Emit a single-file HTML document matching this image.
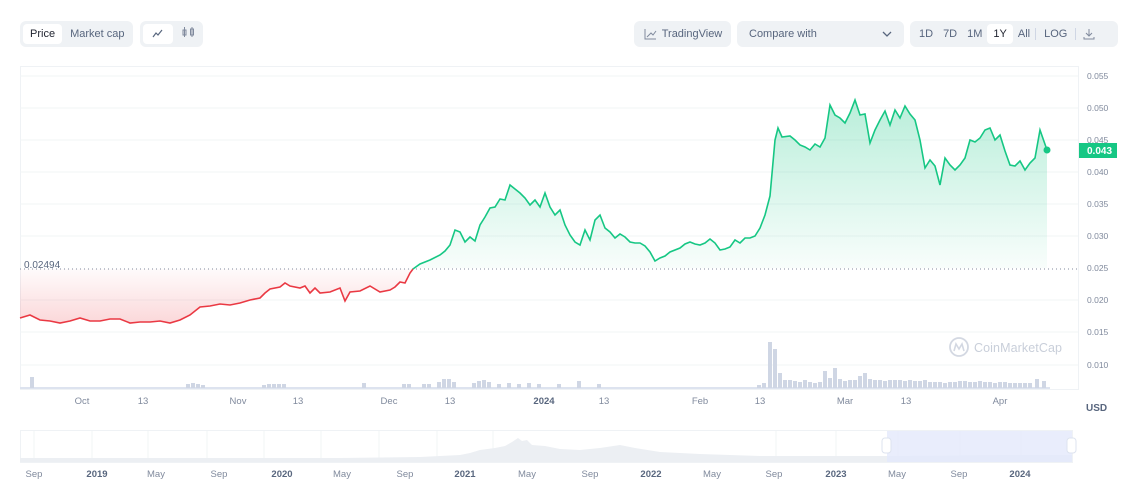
<!DOCTYPE html>
<html><head><meta charset="utf-8"><style>
body{margin:0;width:1135px;height:491px;background:#fff;font-family:"Liberation Sans",sans-serif;overflow:hidden;position:relative}
.grp{position:absolute;top:21px;height:26px;background:#eff2f5;border-radius:6px;display:flex;align-items:center;padding:0 3px;box-sizing:border-box;white-space:nowrap}
.b{font-size:11px;color:#58667e;padding:0 7px;height:20px;line-height:21px;border-radius:4px;white-space:nowrap}
.b.on{background:#fff;color:#222531}
</style></head><body>
<div class="grp" style="left:20px;width:113px"><span class="b on">Price</span><span class="b" style="padding-left:8px">Market cap</span></div>
<div class="grp" style="left:140px;width:63px"><span class="b on" style="width:18px;padding:0 6px"><svg width="18" height="20" viewBox="0 0 18 20"><path d="M4 13l3-4 2 2 4-5" stroke="#58667e" stroke-width="1.2" fill="none"/></svg></span><span style="margin-left:8px"><svg width="14" height="14" viewBox="0 0 14 14"><path d="M3.5 2v10M11 2v10" stroke="#808a9d" stroke-width="1"/><rect x="2" y="5" width="3" height="5" fill="none" stroke="#808a9d"/><rect x="9.5" y="4" width="3" height="6" fill="none" stroke="#808a9d"/></svg></span></div>
<div class="grp" style="left:634px;width:97px;justify-content:center"><svg width="14" height="12" style="margin-right:5px"><path d="M2 1v10h11M4 9l4-4 2 2 3-4" stroke="#808a9d" stroke-width="1" fill="none"/></svg><span style="font-size:11px;color:#58667e">TradingView</span></div>
<div class="grp" style="left:737px;width:167px;padding:0 12px;justify-content:space-between"><span style="font-size:11px;color:#58667e">Compare with</span><svg width="10" height="6"><path d="M1 1l4 4 4-4" stroke="#58667e" stroke-width="1.3" fill="none"/></svg></div>
<div class="grp" style="left:910px;width:208px;padding:0 4px"><span class="b" style="padding:0 5px">1D</span><span class="b" style="padding:0 5px">7D</span><span class="b" style="padding:0 5px">1M</span><span class="b on" style="padding:0 6px">1Y</span><span class="b" style="padding:0 5px">All</span><span style="width:1px;height:12px;background:#cfd6e4"></span><span class="b" style="padding:0 8px">LOG</span><span style="width:1px;height:12px;background:#cfd6e4"></span><svg width="26" height="14"><path d="M13 2v7M10 6l3 3 3-3M8 10v2h10v-2" stroke="#808a9d" stroke-width="1" fill="none"/></svg></div>

<svg width="1135" height="491" style="position:absolute;left:0;top:0">
<defs>
<linearGradient id="g" gradientUnits="userSpaceOnUse" x1="0" y1="100" x2="0" y2="268"><stop offset="0" stop-color="#16c784" stop-opacity=".3"/><stop offset="1" stop-color="#16c784" stop-opacity=".03"/></linearGradient>
<linearGradient id="r" gradientUnits="userSpaceOnUse" x1="0" y1="269" x2="0" y2="330"><stop offset="0" stop-color="#ea3943" stop-opacity=".02"/><stop offset="1" stop-color="#ea3943" stop-opacity=".22"/></linearGradient>
</defs>
<rect x="20.5" y="66.5" width="1058" height="323" fill="none" stroke="#eff2f5"/>
<g stroke="#f2f4f6"><line x1="20" x2="1078" y1="76" y2="76"/><line x1="20" x2="1078" y1="108" y2="108"/><line x1="20" x2="1078" y1="140" y2="140"/><line x1="20" x2="1078" y1="172" y2="172"/><line x1="20" x2="1078" y1="204" y2="204"/><line x1="20" x2="1078" y1="236" y2="236"/><line x1="20" x2="1078" y1="300" y2="300"/><line x1="20" x2="1078" y1="332" y2="332"/><line x1="20" x2="1078" y1="365" y2="365"/></g>
<polygon fill="url(#r)" points="20,269 20,318 30,315 40,320 50,321 60,323 70,321 80,318 90,321 100,321 110,319 120,319 130,323 140,322 150,322 160,321 170,323 180,320 190,315 200,307 210,306 220,304 230,305 240,303 250,300 260,298 265,293 270,289 280,287 285,283 290,286 300,288 305,286 310,293 315,288 320,293 330,292 340,288 345,301 350,292 360,291 370,286 380,292 390,290 395,287 400,282 405,283 410,273 413,269"/>
<polygon fill="url(#g)" points="413,268 420,264 430,260 440,255 445,251 450,245 455,230 460,232 465,242 470,237 475,241 480,225 485,217 490,208 495,207 500,199 505,200 510,185 515,189 520,193 525,198 530,205 535,200 540,207 545,193 550,207 555,215 560,210 565,225 570,235 575,242 580,245 585,230 590,240 595,220 600,215 605,228 610,232 615,238 620,234 625,237 630,242 635,243 640,243 645,246 650,252 655,261 660,258 665,256 670,252 680,248 685,244 690,242 695,244 700,245 705,243 710,239 715,243 720,250 725,249 730,247 735,240 740,243 745,238 750,238 755,236 760,228 765,215 770,196 775,140 778,128 782,137 790,136 795,140 800,145 805,147 810,150 815,144 820,147 825,138 830,105 835,115 840,118 845,123 850,113 855,100 860,115 865,114 870,143 875,130 880,120 885,111 890,125 895,110 900,118 905,106 910,114 915,120 920,140 925,168 930,160 935,166 940,185 945,158 950,165 955,170 960,165 965,158 970,140 975,142 980,138 985,130 990,128 995,140 1000,135 1005,151 1010,165 1015,166 1020,161 1025,170 1030,163 1035,158 1040,130 1047,150 1047,268"/>
<line x1="20" x2="1078" y1="269" y2="269" stroke="#808a9d" stroke-dasharray="1 3"/>
<polyline fill="none" stroke="#ea3943" stroke-width="1.6" points="20,318 30,315 40,320 50,321 60,323 70,321 80,318 90,321 100,321 110,319 120,319 130,323 140,322 150,322 160,321 170,323 180,320 190,315 200,307 210,306 220,304 230,305 240,303 250,300 260,298 265,293 270,289 280,287 285,283 290,286 300,288 305,286 310,293 315,288 320,293 330,292 340,288 345,301 350,292 360,291 370,286 380,292 390,290 395,287 400,282 405,283 410,273 413,269"/>
<polyline fill="none" stroke="#16c784" stroke-width="1.6" points="413,269 420,264 430,260 440,255 445,251 450,245 455,230 460,232 465,242 470,237 475,241 480,225 485,217 490,208 495,207 500,199 505,200 510,185 515,189 520,193 525,198 530,205 535,200 540,207 545,193 550,207 555,215 560,210 565,225 570,235 575,242 580,245 585,230 590,240 595,220 600,215 605,228 610,232 615,238 620,234 625,237 630,242 635,243 640,243 645,246 650,252 655,261 660,258 665,256 670,252 680,248 685,244 690,242 695,244 700,245 705,243 710,239 715,243 720,250 725,249 730,247 735,240 740,243 745,238 750,238 755,236 760,228 765,215 770,196 775,140 778,128 782,137 790,136 795,140 800,145 805,147 810,150 815,144 820,147 825,138 830,105 835,115 840,118 845,123 850,113 855,100 860,115 865,114 870,143 875,130 880,120 885,111 890,125 895,110 900,118 905,106 910,114 915,120 920,140 925,168 930,160 935,166 940,185 945,158 950,165 955,170 960,165 965,158 970,140 975,142 980,138 985,130 990,128 995,140 1000,135 1005,151 1010,165 1015,166 1020,161 1025,170 1030,163 1035,158 1040,130 1047,150"/>
<circle cx="1047" cy="150" r="3.5" fill="#16c784"/>
<rect x="20" y="387" width="1030" height="2" fill="#dde3ef"/>
<g fill="#cfd6e4">
<rect x="30" y="377" width="4" height="11"/><rect x="186" y="384" width="4" height="4"/><rect x="191" y="383" width="4" height="5"/><rect x="196" y="384" width="4" height="4"/><rect x="201" y="385" width="4" height="3"/>
<rect x="262" y="385" width="4" height="3"/><rect x="267" y="384" width="4" height="4"/><rect x="272" y="384" width="4" height="4"/><rect x="277" y="384" width="4" height="4"/><rect x="282" y="384" width="4" height="4"/><rect x="362" y="383" width="4" height="5"/>
<rect x="402" y="384" width="4" height="4"/><rect x="407" y="384" width="4" height="4"/><rect x="422" y="384" width="4" height="4"/><rect x="427" y="384" width="4" height="4"/><rect x="437" y="382" width="4" height="6"/><rect x="442" y="379" width="4" height="9"/><rect x="447" y="379" width="4" height="9"/><rect x="452" y="382" width="4" height="6"/>
<rect x="472" y="383" width="4" height="5"/><rect x="477" y="381" width="4" height="7"/><rect x="482" y="380" width="4" height="8"/><rect x="487" y="382" width="4" height="6"/><rect x="497" y="384" width="4" height="4"/><rect x="507" y="383" width="4" height="5"/><rect x="517" y="384" width="4" height="4"/><rect x="527" y="383" width="4" height="5"/><rect x="537" y="384" width="4" height="4"/><rect x="557" y="384" width="4" height="4"/><rect x="577" y="381" width="4" height="7"/><rect x="597" y="384" width="4" height="4"/>
<rect x="757" y="385" width="4" height="3"/><rect x="762" y="383" width="4" height="5"/><rect x="768" y="342" width="4" height="46"/><rect x="773" y="349" width="4" height="39"/><rect x="778" y="373" width="4" height="15"/><rect x="783" y="380" width="4" height="8"/><rect x="788" y="380" width="4" height="8"/><rect x="793" y="381" width="4" height="7"/><rect x="798" y="382" width="4" height="6"/><rect x="803" y="380" width="4" height="8"/><rect x="808" y="382" width="4" height="6"/><rect x="813" y="383" width="4" height="5"/><rect x="818" y="382" width="4" height="6"/><rect x="823" y="371" width="4" height="17"/><rect x="828" y="378" width="4" height="10"/><rect x="833" y="368" width="4" height="20"/><rect x="838" y="379" width="4" height="9"/><rect x="843" y="381" width="4" height="7"/><rect x="848" y="380" width="4" height="8"/><rect x="853" y="380" width="4" height="8"/><rect x="858" y="376" width="4" height="12"/><rect x="863" y="373" width="4" height="15"/><rect x="868" y="379" width="4" height="9"/><rect x="873" y="380" width="4" height="8"/>
<rect x="878" y="380" width="4" height="8"/><rect x="883" y="381" width="4" height="7"/><rect x="888" y="380" width="4" height="8"/><rect x="893" y="380" width="4" height="8"/><rect x="898" y="380" width="4" height="8"/><rect x="903" y="381" width="4" height="7"/><rect x="908" y="380" width="4" height="8"/><rect x="913" y="381" width="4" height="7"/><rect x="918" y="381" width="4" height="7"/><rect x="923" y="380" width="4" height="8"/><rect x="928" y="382" width="4" height="6"/><rect x="933" y="382" width="4" height="6"/><rect x="938" y="382" width="4" height="6"/><rect x="943" y="383" width="4" height="5"/><rect x="948" y="382" width="4" height="6"/><rect x="953" y="382" width="4" height="6"/><rect x="958" y="381" width="4" height="7"/><rect x="963" y="381" width="4" height="7"/><rect x="968" y="382" width="4" height="6"/><rect x="973" y="382" width="4" height="6"/><rect x="978" y="381" width="4" height="7"/><rect x="983" y="382" width="4" height="6"/><rect x="988" y="382" width="4" height="6"/><rect x="993" y="383" width="4" height="5"/><rect x="998" y="382" width="4" height="6"/><rect x="1003" y="382" width="4" height="6"/><rect x="1008" y="383" width="4" height="5"/><rect x="1013" y="383" width="4" height="5"/><rect x="1018" y="383" width="4" height="5"/><rect x="1023" y="383" width="4" height="5"/><rect x="1028" y="383" width="4" height="5"/><rect x="1035" y="379" width="4" height="9"/><rect x="1042" y="381" width="4" height="7"/>
</g>
<circle cx="959" cy="347" r="9" fill="none" stroke="#d3d8e2" stroke-width="1.8"/>
<path d="M954 351l2-7 3 5 3-5 2 7" stroke="#d3d8e2" stroke-width="1.6" fill="none"/>
<text x="974" y="352" font-size="12.5" fill="#c9cfda" font-family="Liberation Sans" textLength="88">CoinMarketCap</text>
<g font-size="8.5" fill="#808a9d" font-family="Liberation Sans"><text x="1087" y="79">0.055</text><text x="1087" y="111">0.050</text><text x="1087" y="143">0.045</text><text x="1087" y="175">0.040</text><text x="1087" y="207">0.035</text><text x="1087" y="239">0.030</text><text x="1087" y="271">0.025</text><text x="1087" y="303">0.020</text><text x="1087" y="335">0.015</text><text x="1087" y="368">0.010</text></g>
<rect x="1079" y="143" width="38" height="15" fill="#16c784"/>
<text x="1087" y="154" font-size="10" font-weight="bold" fill="#fff" font-family="Liberation Sans">0.043</text>
<text x="24" y="268" font-size="10" fill="#58667e" font-family="Liberation Sans">0.02494</text>
<text x="1086" y="411" font-size="10" font-weight="bold" fill="#58667e" font-family="Liberation Sans">USD</text>
<g font-size="9.5" fill="#808a9d" font-family="Liberation Sans" text-anchor="middle"><text x="82" y="404">Oct</text><text x="143" y="404">13</text><text x="238" y="404">Nov</text><text x="298" y="404">13</text><text x="389" y="404">Dec</text><text x="450" y="404">13</text><text x="544" y="404" font-weight="bold" fill="#58667e">2024</text><text x="604" y="404">13</text><text x="700" y="404">Feb</text><text x="760" y="404">13</text><text x="845" y="404">Mar</text><text x="906" y="404">13</text><text x="1000" y="404">Apr</text></g>
<rect x="20.5" y="430.5" width="1052" height="32" fill="#fff" stroke="#eff2f5"/>
<g stroke="#f2f4f6"><line x1="34" x2="34" y1="431" y2="462"/><line x1="92" x2="92" y1="431" y2="462"/><line x1="148" x2="148" y1="431" y2="462"/><line x1="207" x2="207" y1="431" y2="462"/><line x1="264" x2="264" y1="431" y2="462"/><line x1="321" x2="321" y1="431" y2="462"/><line x1="379" x2="379" y1="431" y2="462"/><line x1="437" x2="437" y1="431" y2="462"/><line x1="493" x2="493" y1="431" y2="462"/><line x1="776" x2="776" y1="431" y2="462"/><line x1="836" x2="836" y1="431" y2="462"/><line x1="898" x2="898" y1="431" y2="462"/><line x1="960" x2="960" y1="431" y2="462"/><line x1="1021" x2="1021" y1="431" y2="462"/></g>
<path d="M20 458 L340 458 L420 457 L440 456 L460 455 L470 453 L480 450 L495 448 L505 446 L512 442 L518 438 L522 441 L527 440 L532 445 L545 446 L560 449 L580 450 L600 448 L620 445 L635 448 L660 452 L700 454 L760 456 L900 456 L1000 455 L1060 455 L1072 455 L1072 462 L20 462Z" fill="#eceff3"/>
<rect x="887" y="431" width="185" height="31" fill="#e3e9fb" opacity=".8"/>
<rect x="882" y="438" width="9" height="15" rx="3" fill="#fff" stroke="#dde3ef"/>
<rect x="1067" y="438" width="9" height="15" rx="3" fill="#fff" stroke="#dde3ef"/>
<g font-size="9.5" fill="#808a9d" font-family="Liberation Sans" text-anchor="middle"><text x="34" y="477">Sep</text><text x="97" y="477" font-weight="bold" fill="#58667e">2019</text><text x="156" y="477">May</text><text x="219" y="477">Sep</text><text x="282" y="477" font-weight="bold" fill="#58667e">2020</text><text x="342" y="477">May</text><text x="405" y="477">Sep</text><text x="465" y="477" font-weight="bold" fill="#58667e">2021</text><text x="527" y="477">May</text><text x="590" y="477">Sep</text><text x="651" y="477" font-weight="bold" fill="#58667e">2022</text><text x="712" y="477">May</text><text x="774" y="477">Sep</text><text x="836" y="477" font-weight="bold" fill="#58667e">2023</text><text x="897" y="477">May</text><text x="959" y="477">Sep</text><text x="1020" y="477" font-weight="bold" fill="#58667e">2024</text></g>
</svg>
</body></html>
